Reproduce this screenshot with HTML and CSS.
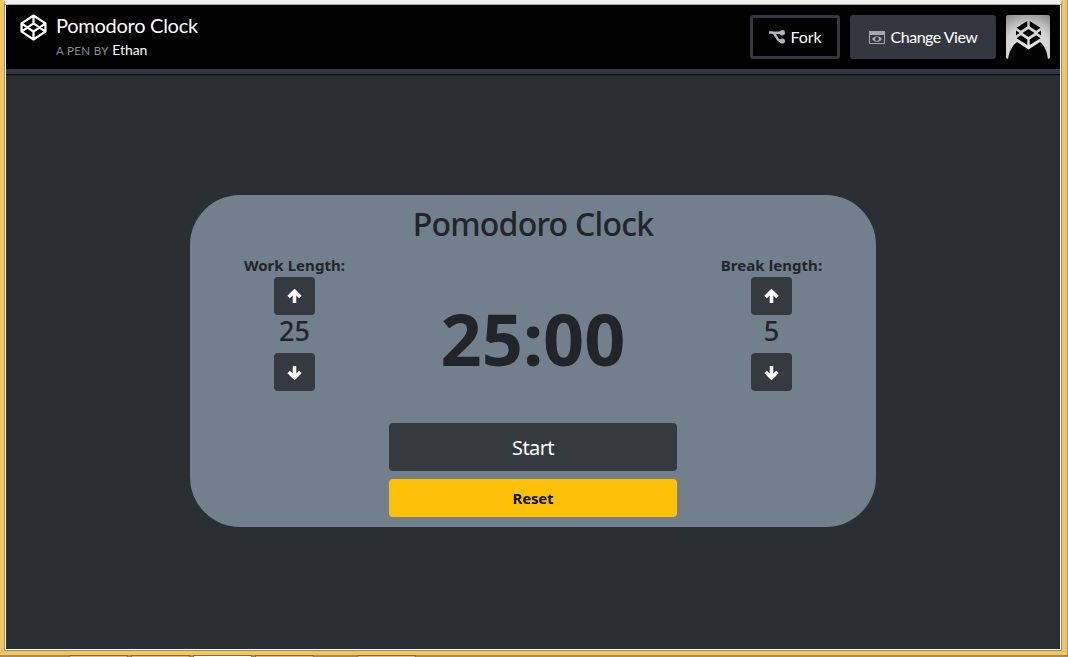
FILE: index.html
```html
<!DOCTYPE html>
<html lang="en">
<head>
<meta charset="utf-8">
<title>Pomodoro Clock</title>
<link rel="stylesheet" href="styles.css">
</head>
<body>
<div class="window">
  <div class="page">
    <header class="header">
      <svg class="logo" viewBox="0 0 26 26" fill="none" stroke="#fff" stroke-width="2.2" stroke-linejoin="round"><path d="M13 1.500 24.500 9v8L13 24.500 1.500 17V9zM13 1.500V9M13 17v7.500M1.500 9 13 17l11.500-8M1.500 17 13 9l11.500 8"/></svg>
      <div class="titles">
        <h1 class="pen-title">Pomodoro Clock</h1>
        <div class="byline"><span class="by">A PEN BY</span> <span class="author">Ethan</span></div>
      </div>
      <div class="actions">
        <button class="action fork"><svg class="fork-icon" viewBox="0 0 16 14"><path d="M0 2.500h3c4 0 4 8.500 9 8.500M4 2.700h8" fill="none" stroke="#b2b4bf" stroke-width="2.400"/><circle cx="13.400" cy="2.700" r="2.600" fill="#b2b4bf"/><circle cx="13.400" cy="11" r="2.600" fill="#b2b4bf"/></svg><span>Fork</span></button>
        <button class="action view"><svg class="view-icon" viewBox="0 0 16 14"><path d="M0 0h16v13H0zM1 4v8h14V4z" fill="#a4a7b3" fill-rule="evenodd"/><path d="M3 8c2.500-3.800 7.500-3.800 10 0-2.500 3.800-7.500 3.800-10 0z" fill="#a4a7b3"/><circle cx="8" cy="8" r="1.900" fill="#343740"/></svg><span>Change View</span></button>
        <svg class="avatar" viewBox="0 0 44 44"><defs><radialGradient id="glow" cx=".5" cy=".75" r=".9"><stop offset="0" stop-color="#e6e6e6"/><stop offset=".55" stop-color="#d3d3d3"/><stop offset="1" stop-color="#858585"/></radialGradient></defs><path fill="url(#glow)" d="M0 0h44v44H0z"/><path d="M2 44c1-7 4-13 9-17l11.500 7.500L34 27c5 4 7 10 8 17z"/><path d="M21.300 6v5.500l-6.500 4.200-4.300-3zM23.700 6v5.500l6.500 4.200 4.300-3zM22.500 14l6 4-6 4-6-4zM10 15.500l3.500 2.500-3.500 2.500zM35 15.500 31.500 18l3.500 2.500zM14.800 20.300l6.500 4.200V30l-10.800-6.800zM30.200 20.300l-6.500 4.200V30l10.800-6.800z"/></svg>
      </div>
    </header>
    <main class="stage">
      <section class="card">
        <h2 class="card-title">Pomodoro Clock</h2>
        <div class="columns">
          <div class="setting">
            <div class="label work">Work Length:</div>
            <button class="step" aria-label="Increase work"><svg class="arrow" viewBox="0 0 14 14"><path d="M7 13V2M1.500 7.500 7 2l5.500 5.500"/></svg></button>
            <div class="value">25</div>
            <button class="step" aria-label="Decrease work"><svg class="arrow" viewBox="0 0 14 14"><path d="M7 1v11M1.500 6.500 7 12l5.500-5.500"/></svg></button>
          </div>
          <div class="clock">25:00</div>
          <div class="setting">
            <div class="label break">Break length:</div>
            <button class="step" aria-label="Increase break"><svg class="arrow" viewBox="0 0 14 14"><path d="M7 13V2M1.500 7.500 7 2l5.500 5.500"/></svg></button>
            <div class="value">5</div>
            <button class="step" aria-label="Decrease break"><svg class="arrow" viewBox="0 0 14 14"><path d="M7 1v11M1.500 6.500 7 12l5.500-5.500"/></svg></button>
          </div>
        </div>
        <button class="wide start">Start</button>
        <button class="wide reset">Reset</button>
      </section>
    </main>
  </div>
</div>
<div class="taskbar"><i class="task"></i><i class="task"></i><i class="task current"></i><i class="task"></i><i class="task apart"></i></div>
</body>
</html>
```
FILE: styles.css
```css
* { box-sizing: border-box; }
body { margin: 0; width: 1068px; height: 657px; overflow: hidden; background: #f0c667; font-family: "Noto Sans", sans-serif; color: #212529; }
button { border: 0; padding: 0; font: inherit; }
.window { height: 655px; padding: 0 5px 4px 4px; border-right: 1px solid #b8954d; }
.page { height: 651px; display: flex; flex-direction: column; background: #2a2f33; border: 1px solid #a58b4f; border-top: 4px solid #f0f0f0; box-shadow: inset 0 1px #aaa, inset 1px 0 #fff, inset -1px -1px #fff; padding: 1px; }
.header { height: 69px; flex: none; display: flex; padding: 0 10px 0 14px; background: #000; border-bottom: 5px solid #343740; box-shadow: 0 1px #0c0e10, 0 2px #202427; }
.logo { width: 27px; height: 27px; margin-top: 9px; }
.titles { font-family: Lato, sans-serif; margin-left: 9px; padding-top: 8px; color: #fff; }
.pen-title { margin: 0; font-size: 20px; line-height: 24px; font-weight: 400; letter-spacing: -.27px; white-space: nowrap; }
.byline { font-size: 14px; line-height: 24px; padding-top: 1px; white-space: nowrap; }
.by { font-size: 11.500px; letter-spacing: .35px; color: #868997; }
.author { letter-spacing: -.1px; }
.actions { margin-left: auto; display: flex; gap: 10px; padding-top: 10px; }
.action { height: 44px; display: flex; align-items: center; justify-content: center; border-radius: 3px; font: 16px Lato, sans-serif; color: #fff; white-space: nowrap; }
.action span { margin-top: -2px; }
.fork { width: 90px; gap: 6px; background: #000; border: 3px solid #343740; letter-spacing: -.1px; }
.view { width: 146px; gap: 6px; background: #343740; letter-spacing: -.5px; }
.fork-icon, .view-icon { width: 16px; height: 14px; }
.view-icon { margin-top: 2px; }
.avatar { width: 44px; height: 44px; border-radius: 2px; }
.stage { padding: 121px 184px 0; }
.card { width: 686px; height: 332px; border-radius: 50px; background: #727f8c; display: flex; flex-direction: column; align-items: center; }
.card-title { margin: 10px 0 0; font-size: 32px; line-height: 38px; font-weight: 500; letter-spacing: -.75px; white-space: nowrap; }
.columns { width: 686px; height: 148px; margin-top: 10px; display: flex; justify-content: space-between; padding: 0 4px; }
.setting { width: 201px; display: flex; flex-direction: column; align-items: center; }
.label { height: 24px; line-height: 24px; font-size: 15px; font-weight: 700; letter-spacing: .05px; white-space: nowrap; }
.step { width: 41px; height: 38px; flex: none; border-radius: 4px; background: #343a40; display: flex; align-items: center; justify-content: center; }
.arrow { width: 15px; height: 15px; fill: none; stroke: #fff; stroke-width: 3.300; }
.value { height: 38px; line-height: 31px; font-size: 27px; font-weight: 500; }
.clock { padding-top: 37px; font-size: 72px; line-height: 96px; font-weight: 700; white-space: nowrap; }
.wide { width: 288px; border-radius: 4px; flex: none; }
.start { height: 48px; margin-top: 22px; background: #343a40; color: #fff; font-size: 20px; letter-spacing: -.6px; }
.reset { height: 38px; margin-top: 8px; background: #ffc107; font-size: 15px; font-weight: 700; letter-spacing: -.2px; color: #111; }
.taskbar { height: 2px; background: #a98c45; display: flex; gap: 3px; padding-left: 69px; }
.task { width: 59px; height: 2px; background: #d5bd88; border: solid #866b36; border-width: 1px 1px 0; }
.current { background: #fff; }
.apart { margin-left: 40px; }
```
